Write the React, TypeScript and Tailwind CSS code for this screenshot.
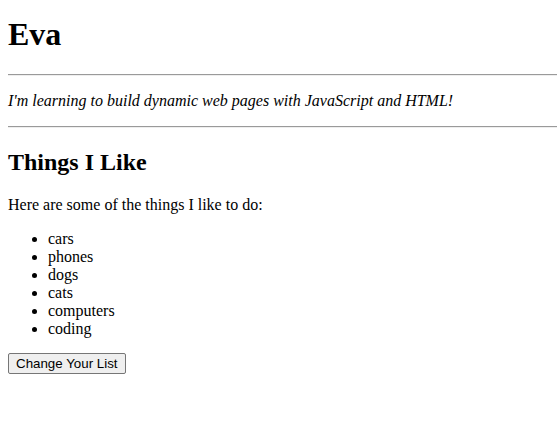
export default function App() {
  const likes = ['cars', 'phones', 'dogs', 'cats', 'computers', 'coding']

  return (
    <div className="min-h-screen bg-white pl-2 pt-[15.5px] font-['Liberation_Serif',serif] text-base leading-[normal] text-black">
      <h1 className="mb-[21.5px] text-[32px] font-bold">Eva</h1>
      <hr className="h-0 border-t border-b border-t-[#9a9a9a] border-b-[#eeeeee]" />
      <p className="my-4 italic">I'm learning to build dynamic web pages with JavaScript and HTML!</p>
      <hr className="h-0 border-t border-b border-t-[#9a9a9a] border-b-[#eeeeee]" />

      {/* Lista de gustos */}
      <h2 className="mt-[18px] mb-[18px] text-2xl font-bold">Things I Like</h2>
      <p className="mb-4">Here are some of the things I like to do:</p>
      <ul className="mb-[15px] list-disc pl-10">
        {likes.map((item) => (
          <li key={item}>{item}</li>
        ))}
      </ul>
      <button
        type="button"
        className="rounded-[2px] border border-[#767676] bg-[#efefef] px-[7px] py-[2px] font-['Liberation_Sans',Arial,sans-serif] text-[13.333px] leading-[normal] text-black"
      >
        Change Your List
      </button>
    </div>
  )
}
